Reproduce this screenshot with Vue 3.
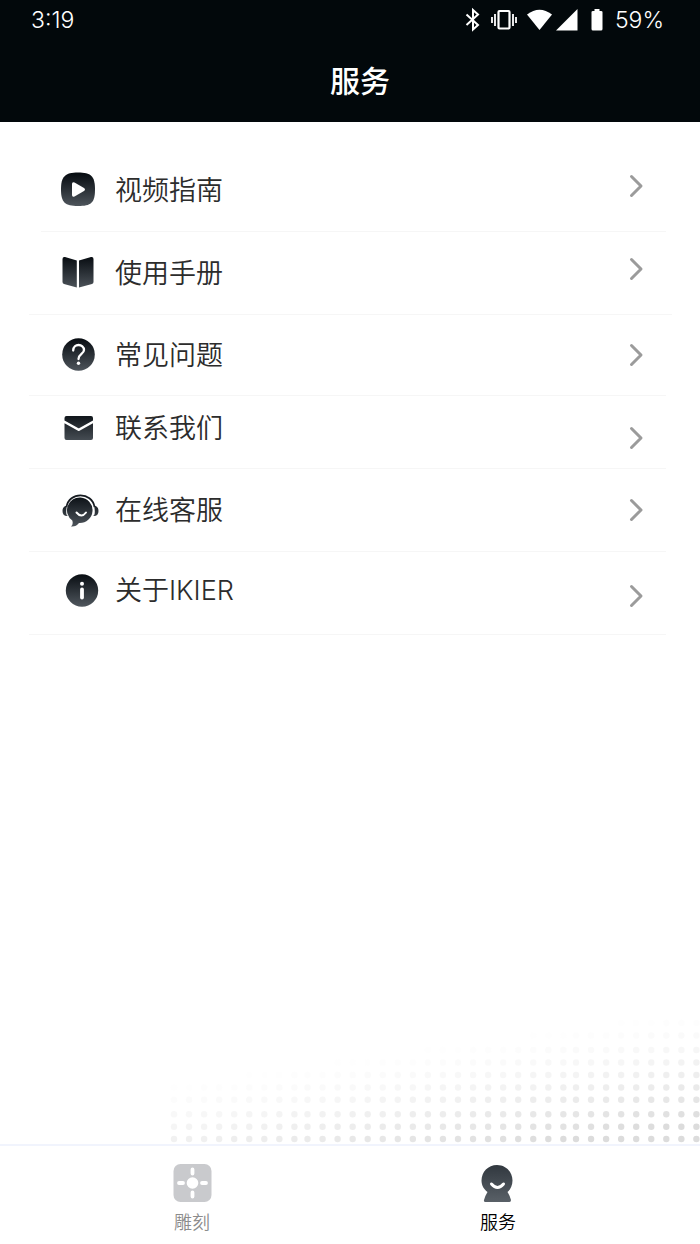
<script setup>
import { ref } from 'vue';

const activeTab = ref('service');

const items = [
    { id: 'video', label: '视频指南', row: 'row--inset', chevron: 'chevron--high' },
    { id: 'manual', label: '使用手册', row: 'row--wide', chevron: 'chevron--high' },
    { id: 'faq', label: '常见问题', row: 'row--snug', chevron: '' },
    { id: 'contact', label: '联系我们', row: 'row--compact', chevron: 'chevron--lowest' },
    { id: 'support', label: '在线客服', row: '', chevron: '' },
    { id: 'about', label: '关于IKIER', row: 'row--raised', chevron: 'chevron--low' }
];

// Halftone corner: three blocks of columns and rows with a small seam between them
const cols = [];
[[4, 9], [137.5, 18], [406, 9]].forEach(([start, count]) => {
    for (let i = 0; i < count; i++) cols.push(start + i * 15.05);
});
const rows = [6, 19, 31.5, 46, 58.5, 71, 83.5, 95.7, 110.3, 122.7, 135];

const dots = [];
for (const y of rows) {
    for (const x of cols) {
        const reach = (x - 243) / 7.2 + (y - 42);
        const alpha = reach > 0 ? Math.min(1, Math.pow(reach / 115, 1.4)) : 0;
        if (alpha > 0) dots.push({ x, y, alpha });
    }
}
</script>

<template>
    <div class="page">
        <header class="header">
            <div class="status">
                <span>3:19</span>
                <div class="status-icons">
                    <svg class="status-svg" viewBox="460 0 154 40" aria-hidden="true">
                        <path d="M465.500 14.500 L477 25 L472 29.500 V10 L477 14.500 L465.500 25" fill="none" stroke="#fff" stroke-width="2" />
                        <rect x="497.500" y="11" width="11" height="17.500" rx="1" fill="none" stroke="#fff" stroke-width="2.200" />
                        <path d="M494 14V26M491 17V23M512 14V26M515 17V23" stroke="#fff" stroke-width="1.800" />
                        <path d="M526 14.500 Q538.500 5 551 14.500 L538.500 30 Z" fill="#fff" />
                        <path d="M555 30.500 L576.500 9 V30.500 Z" fill="#fff" />
                        <path d="M593.500 9h5v2h1.500q1.500 0 1.500 1v17q0 1.500-1.500 1.500h-8q-1.500 0-1.500-1.500V12q0-1 1.500-1H593.500z" fill="#fff" />
                    </svg>
                    <span>59%</span>
                </div>
            </div>
            <h1 class="title">服务</h1>
        </header>

        <main class="main">
            <ul class="list">
                <li v-for="item in items" :key="item.id" class="row" :class="item.row">
                    <a class="row-link" :href="'#' + item.id">
                        <svg class="row-icon" viewBox="0 0 40 40" aria-hidden="true">
                            <defs>
                                <linearGradient :id="'fill-' + item.id" gradientUnits="userSpaceOnUse" x1="0" y1="4" x2="0" y2="37">
                                    <stop offset="0" stop-color="#080d12" />
                                    <stop offset="1" stop-color="#50575e" />
                                </linearGradient>
                            </defs>
                            <g :fill="`url(#fill-${item.id})`">
                                <template v-if="item.id === 'video'">
                                    <path d="M18 2.500C31 2.500 35 6 35 19.500S31 36 18 36 1 32.500 1 19.500 5 2.500 18 2.500Z" />
                                    <path d="M12 14Q12 11.500 14.500 12.500L24 18Q26 19.500 24 21L14.500 26.500Q12 27.500 12 25Z" fill="#fff" />
                                </template>
                                <template v-else-if="item.id === 'manual'">
                                    <path d="M2.500 6Q2.500 3.500 5 4L16.800 7.500V34.500L4 31Q2.500 30.500 2.500 29Z" />
                                    <path d="M33.500 6Q33.500 3.500 31 4L19 7.500V34.500L32 31Q33.500 30.500 33.500 29Z" />
                                </template>
                                <template v-else-if="item.id === 'faq'">
                                    <circle cx="18.500" cy="19.500" r="16.300" />
                                    <path d="M13.200 15.500C13.200 8 24 8.500 24 15C24 19 18.500 19 18.500 24" fill="none" stroke="#fff" stroke-width="2.300" stroke-linecap="round" />
                                    <circle cx="18.500" cy="28.300" r="1.700" fill="#fff" />
                                </template>
                                <template v-else-if="item.id === 'contact'">
                                    <path d="M4.500 12.500V10Q4.500 8 6.500 8H31Q33 8 33 10V12.500L19.500 20Q18.700 20.500 18 20Z" />
                                    <path d="M4.500 15.300L18 22.700Q18.700 23.200 19.500 22.700L33 15.300V30Q33 32 31 32H6.500Q4.500 32 4.500 30Z" />
                                </template>
                                <g v-else-if="item.id === 'support'" transform="translate(0 1)">
                                    <path d="M20.500 6.500A12.700 12.700 0 1 1 19 32Q16 36 11 35.500Q13.500 33.500 12.300 29.500A12.700 12.700 0 0 1 20.500 6.500Z" />
                                    <path d="M6.500 16C9 0.500 32 0.500 34.500 16" fill="none" stroke="#151a20" stroke-width="1.700" />
                                    <path d="M7 14.500Q5 24 8 25Q2.500 25.500 2.500 20Q2.500 15.500 7 14.500ZM34 14.500Q36 24 33 25Q38.500 25.500 38.500 20Q38.500 15.500 34 14.500Z" />
                                    <path d="M16.500 21.500Q21.500 27.500 26 21.500" fill="none" stroke="#fff" stroke-width="2" stroke-linecap="round" />
                                </g>
                                <template v-else>
                                    <circle cx="22" cy="20.500" r="16.200" />
                                    <circle cx="22" cy="13.800" r="2" fill="#fff" />
                                    <path d="M22 19.500V27.500" stroke="#fff" stroke-width="3.800" stroke-linecap="round" />
                                </template>
                            </g>
                        </svg>
                        <span class="row-label">{{ item.label }}</span>
                        <svg class="chevron" :class="item.chevron" viewBox="0 0 16 24" aria-hidden="true">
                            <path d="M3.500 2.500L13 12L3.500 21.500" fill="none" stroke="#9b9b9b" stroke-width="3" stroke-linecap="round" stroke-linejoin="round" />
                        </svg>
                    </a>
                </li>
            </ul>
            <svg class="halftone" width="530" height="140" viewBox="0 0 530 140" aria-hidden="true">
                <circle v-for="(dot, i) in dots" :key="i" :cx="dot.x" :cy="dot.y" r="3.200" fill="#dcdcdc" :fill-opacity="dot.alpha" />
            </svg>
        </main>

        <nav class="tabs">
            <button type="button" class="tab" :class="{ 'tab--active': activeTab === 'engrave' }" @click="activeTab = 'engrave'">
                <svg class="tab-icon" viewBox="0 0 40 40" aria-hidden="true">
                    <rect x="1.500" y="1" width="38" height="38" rx="7" fill="#c9cacd" />
                    <circle cx="20.500" cy="20" r="5.800" fill="#fff" />
                    <path d="M20.500 6.500V10.500M20.500 29.500V33.500M7 20H11M30 20H34" stroke="#fff" stroke-width="3.800" stroke-linecap="round" />
                </svg>
                <span>雕刻</span>
            </button>
            <button type="button" class="tab" :class="{ 'tab--active': activeTab === 'service' }" @click="activeTab = 'service'">
                <svg class="tab-icon" viewBox="0 0 40 40" aria-hidden="true">
                    <defs>
                        <linearGradient id="fill-service" x1="0" y1="0" x2="0" y2="1">
                            <stop offset="0" stop-color="#31383f" />
                            <stop offset="1" stop-color="#596067" />
                        </linearGradient>
                    </defs>
                    <path d="M19 2C28 2 34.500 9 34.500 17.500C34.500 22.500 32.500 26.500 29.500 29Q32 33 33 37Q33 39 31.500 39H7.500Q5.500 39 6 37Q7 33 9.500 29C6 26.500 3.500 22.500 3.500 17.500C3.500 9 10 2 19 2Z" fill="url(#fill-service)" />
                    <path d="M13.500 21Q19.500 28 25.500 21" fill="none" stroke="#fff" stroke-width="3" stroke-linecap="round" />
                </svg>
                <span>服务</span>
            </button>
        </nav>
    </div>
</template>

<style>
body {
    margin: 0;
    background: #fff;
}
</style>

<style scoped>
.page {
    display: flex;
    flex-direction: column;
    min-height: 100vh;
    font-family: Inter, "Noto Sans CJK SC", sans-serif;
    color: #2c2c2c;
}

.header {
    background: #02080b;
    color: #fff;
}

.status {
    display: flex;
    align-items: center;
    justify-content: space-between;
    height: 40px;
    padding: 0 36px 0 31px;
    font-size: 23px;
    font-weight: 300;
}

.status-icons {
    display: flex;
    align-items: center;
}

.status-svg {
    width: 154px;
    height: 40px;
}

.title {
    margin: 0;
    padding: 0 0 0 20px;
    height: 82px;
    line-height: 82px;
    font-size: 30px;
    font-weight: 500;
    text-align: center;
}

.main {
    position: relative;
    flex: 1;
    padding-top: 27px;
}

.list {
    margin: 0;
    padding: 0;
    list-style: none;
}

.row {
    margin: 0 34px 0 29px;
    border-bottom: 1px solid #f6f6f6;
}

.row-link {
    display: flex;
    align-items: center;
    padding: 21px 22px 21px 31px;
    color: inherit;
    text-decoration: none;
}

.row-icon {
    flex: none;
    width: 40px;
    height: 40px;
}

.row-label {
    flex: 1;
    margin-left: 15px;
    padding-top: 2px;
    font-size: 27px;
    font-weight: 350;
    line-height: 38px;
}

.chevron {
    flex: none;
    width: 16px;
    height: 24px;
}

.chevron--high {
    padding-bottom: 8px;
}

.chevron--low {
    padding-top: 12px;
}

.chevron--lowest {
    padding-top: 20px;
}

.row--inset {
    margin-left: 41px;
}

.row--inset .row-link {
    padding-left: 19px;
}

.row--wide {
    margin-right: 28px;
}

.row--wide .row-link {
    padding-right: 28px;
}

.row--snug .row-link {
    padding-top: 20px;
    padding-bottom: 20px;
}

.row--compact .row-link {
    padding-top: 10px;
    padding-bottom: 18px;
}

.row--raised .row-link {
    padding-top: 18px;
    padding-bottom: 24px;
}

.halftone {
    position: absolute;
    right: 0;
    bottom: 0;
}

.tabs {
    display: flex;
    box-sizing: border-box;
    height: 100px;
    padding: 0 49px 0 39px;
    border-top: 2px solid #f1f4fd;
    background: #fff;
}

.tab {
    display: flex;
    flex: 1;
    flex-direction: column;
    align-items: center;
    gap: 7px;
    padding: 17px 0 0;
    border: none;
    background: none;
    font-family: inherit;
    font-size: 18px;
    font-weight: 350;
    line-height: 26px;
    color: #8c8c8c;
    cursor: pointer;
}

.tab--active {
    color: #000;
}

.tab-icon {
    width: 40px;
    height: 40px;
}
</style>
